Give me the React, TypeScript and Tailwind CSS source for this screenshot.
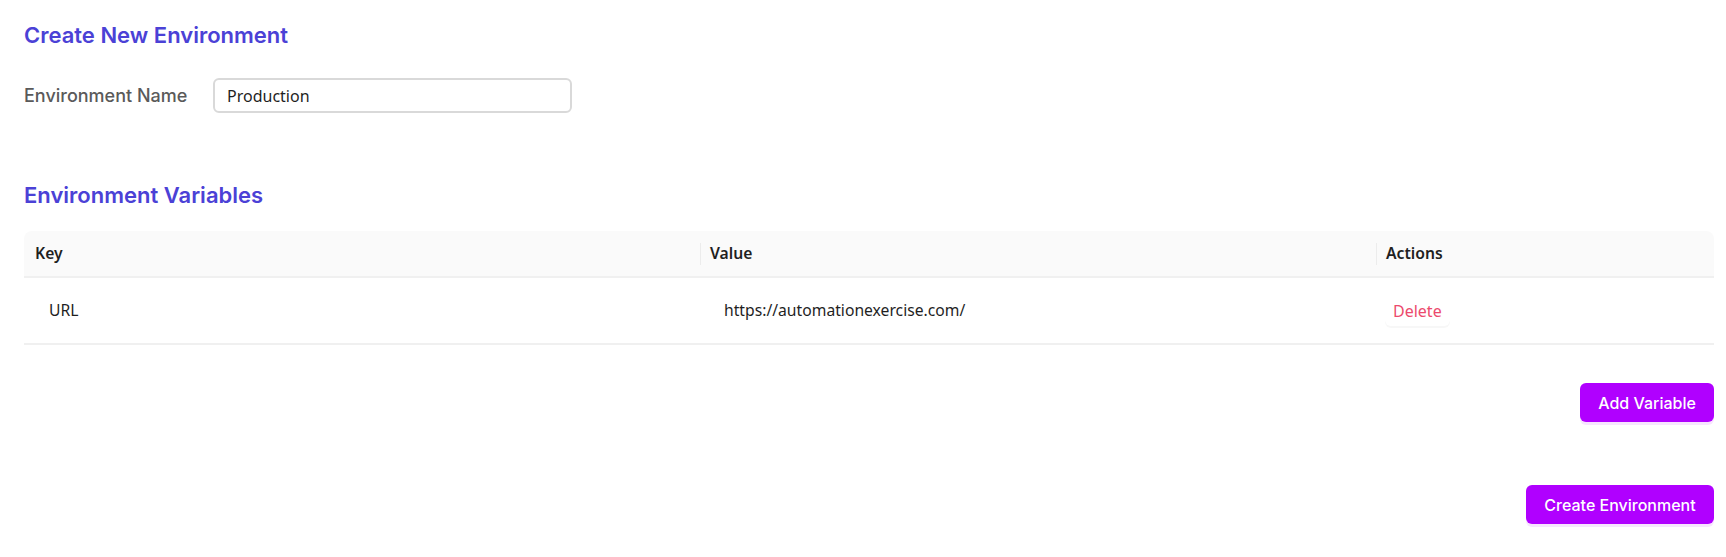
import React, { useState } from 'react';

interface EnvVariable {
  key: string;
  value: string;
}

const headingFont = { fontFamily: 'Inter, "Noto Sans", sans-serif' };

const App: React.FC = () => {
  const [name, setName] = useState('Production');
  const [variables, setVariables] = useState<EnvVariable[]>([
    { key: 'URL', value: 'https://automationexercise.com/' },
  ]);

  const handleDelete = (idx: number) => {
    setVariables(variables.filter((_, i) => i !== idx));
  };

  const handleAdd = () => {
    setVariables([...variables, { key: '', value: '' }]);
  };

  return (
    <div className="min-h-screen bg-white pl-6 pr-3 pt-[21px] font-['Noto_Sans',sans-serif]">
      {/* 환경 생성 */}
      <h2 style={headingFont} className="text-[22px] leading-7 font-semibold text-[#4b41d6]">
        Create New Environment
      </h2>

      <div className="mt-[29px] flex items-center">
        <label style={headingFont} className="w-[189px] text-[18px] font-medium text-[#5a5a5a]">
          Environment Name
        </label>
        <input
          value={name}
          onChange={(e) => setName(e.target.value)}
          className="h-[35px] w-[359px] rounded-md border-2 border-[#d9d9d9] px-3 text-[16px] text-[#1f1f1f] outline-none"
        />
      </div>

      {/* 환경 변수 */}
      <h2 style={headingFont} className="mt-[68px] text-[22px] leading-7 font-semibold text-[#4b41d6]">
        Environment Variables
      </h2>

      <div className="mt-[22px]">
        <div className="grid h-[47px] grid-cols-[2fr_2fr_1fr] rounded-t-lg border-b-2 border-[#f0f0f0] bg-[#fafafa] text-[15.7px] font-semibold text-[#1f1f1f]">
          <div className="flex items-center pl-[11px]">Key</div>
          <div className="flex items-center">
            <span className="h-[22px] w-px bg-[#ececec]"></span>
            <span className="ml-[9px]">Value</span>
          </div>
          <div className="flex items-center">
            <span className="h-[22px] w-px bg-[#ececec]"></span>
            <span className="ml-[9px]">Actions</span>
          </div>
        </div>

        {variables.map((v, idx) => (
          <div
            key={idx}
            className="grid h-[67px] grid-cols-[2fr_2fr_1fr] border-b-2 border-[#f0f0f0] text-[15.7px] text-[#1f1f1f]"
          >
            <div className="flex items-center pl-[25px]">{v.key}</div>
            <div className="flex items-center pl-6">{v.value}</div>
            <div className="flex items-center pl-[9px]">
              <button
                onClick={() => handleDelete(idx)}
                className="rounded-md px-2 py-[3px] text-[16px] text-[#ec4a6d] shadow-[0_2px_0_rgba(0,0,0,0.03)]"
              >
                Delete
              </button>
            </div>
          </div>
        ))}
      </div>

      <div className="mt-[38px] flex justify-end">
        <button
          onClick={handleAdd}
          style={headingFont}
          className="h-[39px] w-[134px] rounded-md bg-[#b000ff] text-[16px] font-medium text-white shadow-[0_3px_0_rgba(176,0,255,0.1)]"
        >
          Add Variable
        </button>
      </div>

      <div className="mt-[63px] flex justify-end">
        <button
          style={headingFont}
          className="h-[39px] w-[188px] rounded-md bg-[#b000ff] text-[16px] font-medium text-white shadow-[0_3px_0_rgba(176,0,255,0.1)]"
        >
          Create Environment
        </button>
      </div>
    </div>
  );
};

export default App;
